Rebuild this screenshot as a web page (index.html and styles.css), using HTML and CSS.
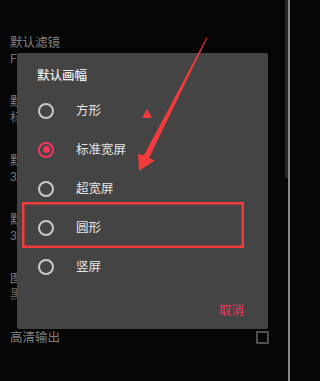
FILE: index.html
```html
<!DOCTYPE html>
<html lang="zh-CN">
<head>
<meta charset="utf-8">
<title>默认画幅</title>
<link rel="stylesheet" href="styles.css">
</head>
<body>
<div class="screen">
  <ul class="settings">
    <li class="item"><div class="label">默认滤镜</div><div class="value">Fresh</div></li>
    <li class="item"><div class="label">默认画幅</div><div class="value">标准宽屏</div></li>
    <li class="item"><div class="label">默认时长</div><div class="value">3秒</div></li>
    <li class="item"><div class="label">默认间隔</div><div class="value">3秒</div></li>
    <li class="item"><div class="label">图片背景</div><div class="value">黑色</div></li>
    <li class="item row"><div class="label">高清输出</div><span class="checkbox"></span></li>
  </ul>

  <div class="dialog">
    <div class="dialog-title">默认画幅</div>
    <ul class="options">
      <li class="option"><span class="radio"></span><span class="opt-text">方形</span></li>
      <li class="option"><span class="radio checked"></span><span class="opt-text">标准宽屏</span></li>
      <li class="option"><span class="radio"></span><span class="opt-text">超宽屏</span></li>
      <li class="option"><span class="radio"></span><span class="opt-text">圆形</span></li>
      <li class="option"><span class="radio"></span><span class="opt-text">竖屏</span></li>
    </ul>
    <div class="actions"><span class="cancel">取消</span></div>
  </div>

  <svg class="annot" width="290" height="381" viewBox="0 0 290 381" xmlns="http://www.w3.org/2000/svg">
    <rect x="23.25" y="203.25" width="219.5" height="43.5" fill="none" stroke="#f23b3b" stroke-width="2.5"/>
    <polygon points="207.5,37.5 149,158 154.5,160.5 139,171 138,153.5 143.8,155.6 206.6,37.5" fill="#f43a3a"/>
    <polygon points="147,109 142,118 152,118" fill="#f43a3a"/>
  </svg>
</div>
<div class="scrollbar"><div class="thumb"></div><div class="edge"></div></div>
</body>
</html>
```

FILE: styles.css
```css
html, body {
  margin: 0;
  padding: 0;
}
body {
  width: 290px;
  height: 381px;
  overflow: hidden;
  background: #060606;
  display: flex;
  font-family: Roboto, "Noto Sans CJK SC", sans-serif;
}
.screen {
  position: relative;
  flex: 1;
}
.settings {
  list-style: none;
  margin: 0;
  padding: 35px 16px 0 10px;
}
.item {
  margin-bottom: 27px;
}
.label {
  font-size: 12.5px;
  line-height: 16px;
  color: #808080;
}
.value {
  font-size: 12.5px;
  line-height: 16px;
  color: #6e6e6e;
}
.row {
  display: flex;
  align-items: center;
  justify-content: space-between;
}
.checkbox {
  width: 9px;
  height: 9px;
  border: 2px solid #505050;
  border-radius: 1px;
  margin-top: -2px;
}
.dialog {
  position: absolute;
  left: 17px;
  top: 53px;
  width: 251px;
  height: 276px;
  background: #444444;
  border-radius: 2px;
  box-sizing: border-box;
}
.dialog-title {
  padding: 15px 0 0 20px;
  font-size: 12.5px;
  line-height: 16px;
  color: #ececec;
  font-weight: 500;
}
.options {
  list-style: none;
  margin: 7px 0 0;
  padding: 0;
}
.option {
  height: 39px;
  display: flex;
  align-items: center;
  padding-left: 21px;
}
.radio {
  width: 12px;
  height: 12px;
  border: 2px solid #c9c9c9;
  border-radius: 50%;
  position: relative;
  flex: none;
}
.radio.checked {
  border-color: #f2365c;
}
.radio.checked::after {
  content: "";
  position: absolute;
  left: 2.5px;
  top: 2.5px;
  width: 7px;
  height: 7px;
  border-radius: 50%;
  background: #f2365c;
}
.opt-text {
  margin-left: 22px;
  font-size: 12.5px;
  line-height: 16px;
  color: #e4e4e4;
}
.actions {
  padding: 14px 24px 13px 0;
  text-align: right;
}
.cancel {
  font-size: 12.5px;
  line-height: 16px;
  color: #ec3a5c;
}
.annot {
  position: absolute;
  left: 0;
  top: 0;
  pointer-events: none;
}
.scrollbar {
  width: 5px;
  display: flex;
  flex: none;
}
.thumb {
  width: 3px;
  height: 178px;
  background: #262626;
}
.edge {
  width: 2px;
  background: #8a8a8a;
}
```
